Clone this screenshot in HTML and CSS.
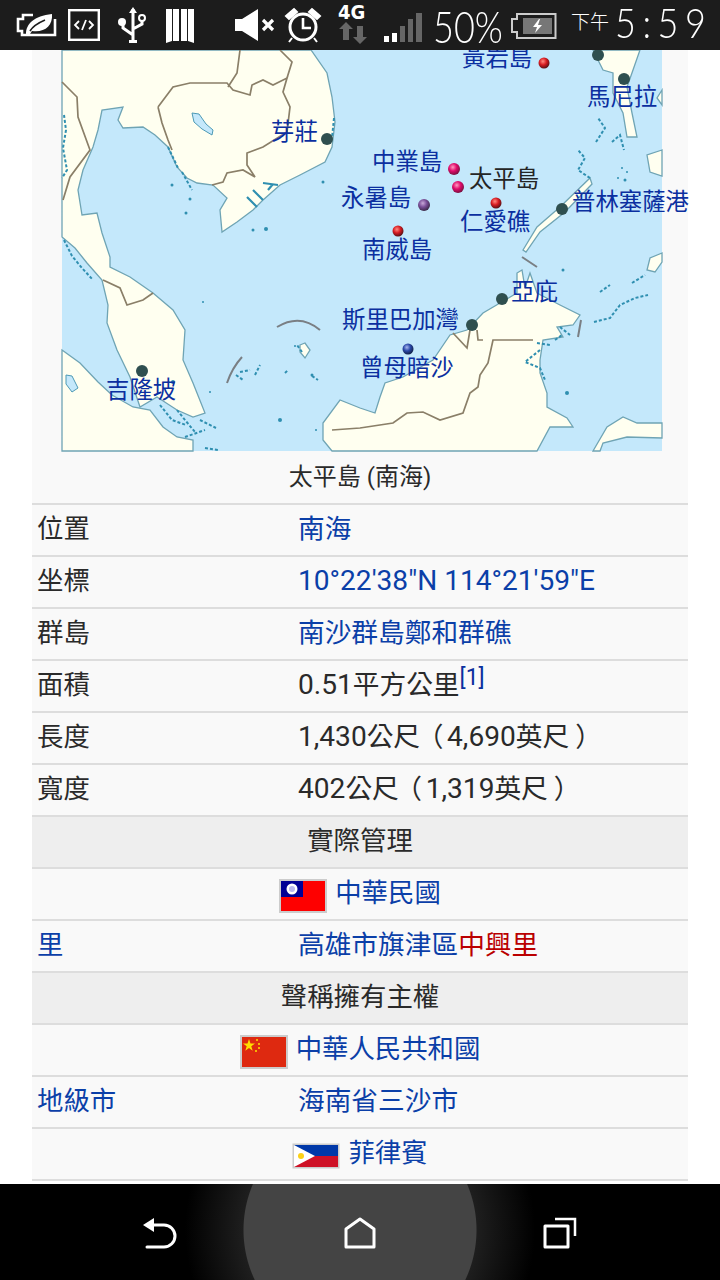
FILE: index.html
```html
<!DOCTYPE html>
<html lang="zh-Hant">
<head>
<meta charset="utf-8">
<title>太平島</title>
<link rel="stylesheet" href="styles.css">
</head>
<body>
<div class="phone">
  <header class="status">
    <svg class="si s1" width="40" height="24" viewBox="0 0 40 24"><path d="M16 2H6V6H1V18H5V22H38V6M32 22" fill="none" stroke="#fff" stroke-width="2.600"/><path d="M9 21c0-10 8-18 26-20 1 12-8 19-20 17l-2 3z" fill="#fff"/><path d="M13 18c3-5 8-8 15-11" stroke="#1c1c1c" stroke-width="1.600" fill="none"/></svg>
    <svg class="si s2" width="32" height="32" viewBox="0 0 32 32"><rect x="1.200" y="1.200" width="29.600" height="29.600" fill="none" stroke="#fff" stroke-width="2.400"/><path d="M11 12l-4 4 4 4M21 12l4 4-4 4M18 11l-4 10" fill="none" stroke="#fff" stroke-width="1.800"/></svg>
    <svg class="si s3" width="28" height="36" viewBox="0 0 28 36"><path d="M15 2v32M15 28l-10-7v-4M15 22l9-5v-4" fill="none" stroke="#fff" stroke-width="3"/><path d="M15 0l4 6h-8z" fill="#fff"/><circle cx="4" cy="15" r="4" fill="#fff"/><circle cx="24" cy="11" r="3" fill="none" stroke="#fff" stroke-width="2"/><rect x="11" y="33" width="8" height="3" fill="#fff"/></svg>
    <svg class="si s4" width="28" height="35" viewBox="0 0 28 35"><path d="M0 1h6v32l-6 2zM7 1h6v32H7zM15 1h6v32h-6zM22 1h6v34l-6-2z" fill="#fff"/></svg>
    <svg class="si s5" width="40" height="32" viewBox="0 0 40 32"><path d="M0 10h7L23 0v32L7 22H0z" fill="#fff"/><path d="M28 11l10 10M38 11l-10 10" stroke="#fff" stroke-width="3.200"/></svg>
    <svg class="si s6" width="36" height="36" viewBox="0 0 36 36"><circle cx="18" cy="20" r="13" fill="none" stroke="#fff" stroke-width="3"/><path d="M18 11v10h8" fill="none" stroke="#fff" stroke-width="2.600"/><path d="M1 9l8-7 3 3-8 7zM35 9l-8-7-3 3 8 7zM7 31l-3 4M29 31l3 4" stroke="#fff" fill="#fff" stroke-width="2"/></svg>
    <svg class="si s7" width="30" height="42" viewBox="0 0 30 42"><text x="0" y="17" class="net">4G</text><path d="M8 20l7 7h-4v11H5V27H1zM22 42l7-7h-4V24h-6v11h-4z" fill="#666"/></svg>
    <svg class="si s8" width="38" height="29" viewBox="0 0 38 29"><rect x="0" y="23" width="5" height="6" fill="#fff"/><rect x="8" y="20" width="5" height="9" fill="#fff"/><rect x="16" y="13" width="5" height="16" fill="#666"/><rect x="24" y="6" width="5" height="23" fill="#666"/><rect x="32" y="0" width="6" height="29" fill="#666"/></svg>
    <span class="pct">50%</span>
    <svg class="si s9" width="46" height="26" viewBox="0 0 46 26"><path d="M6 6V1h38.500v24H6v-6H1V6z" fill="none" stroke="#ccc" stroke-width="2"/><rect x="12" y="5" width="29" height="16" fill="#777"/><path d="M28 6l-6 8h4l-2 6 7-8h-4l2-6z" fill="#fff"/></svg>
    <span class="ampm">下午</span>
    <span class="clock">5:59</span>
  </header>

  <main class="page">
    <div class="infobox">
      <div class="mapcell">
        <svg class="map" width="600" height="401" viewBox="62 50 600 401">
          <rect x="62" y="50" width="600" height="401" class="sea"/>
          <g class="soft">
          <g class="land">
            <path d="M62 50H311L327 73 332 97 335 122 332 147 325 162 300 175 280 185 263 200 253 210 237 222 222 232 220 210 227 198 213 185 197 183 187 178 177 167 168 147 155 135 143 127 123 128 118 120 123 107 102 110 98 130 93 147 83 170 78 190 82 215 97 213 102 233 110 257 110 267 130 277 153 293 173 310 185 330 183 360 193 383 205 413 193 417 177 410 157 397 140 407 130 377 117 350 107 323 108 305 102 280 87 263 75 248 62 237Z"/>
            <path d="M62 350 80 363 98 382 112 395 133 407 150 410 163 427 177 437 193 440 193 451H62Z"/>
            <path d="M332 451 323 440 323 423 340 400 360 408 375 413 380 397 385 383 403 377 433 360 450 335 467 330 483 313 500 303 517 293 517 273 522 270 525 288 530 273 537 293 560 305 580 315 573 325 557 327 563 337 543 340 540 360 540 373 547 393 547 407 567 418 573 427 550 427 537 451Z"/>
            <path d="M593 451 607 427 623 417 637 423 662 423V438L627 437 603 443 600 451Z"/>
            <path d="M593 50 603 70 613 73 613 93 623 113 627 137 637 137 632 113 627 87 633 70 640 50Z"/>
            <path d="M523 250 537 227 560 207 590 178 592 184 565 212 540 232 526 252Z"/>
            <path d="M662 150 647 155 650 172 662 176ZM662 253 650 258 647 270 655 272 662 262ZM662 90 657 98 662 105Z"/>
            <path d="M300 345 305 343 310 350 305 358 300 352Z"/>
          </g>
          <g class="lake">
            <path d="M192 113 199 114 206 124 213 130 212 135 202 129 194 122Z"/>
            <path d="M66 375 72 376 78 388 72 392 66 384Z"/>
          </g>
          <g class="reef">
            <path d="M64 115 66 130 63 148 67 170 62 178M64 240 72 256 82 268 93 280M240 372 250 370M255 375 260 365M236 375 243 380"/>
            <path d="M177 410 185 420 195 432M160 405 172 420 186 425M200 420 216 428M185 437 205 430M205 448 218 450"/>
            <path d="M334 118 332 138M168 147 178 168M182 172 192 190"/>
            <path d="M590 178 578 170 585 158 578 150M596 142 605 128 598 118M612 142 620 135 624 150"/>
            <path d="M540 350 525 362 540 368 545 380M537 343 550 345M555 340 562 335M560 327 570 335"/>
            <path d="M594 322 610 318 620 305 635 298 648 295M600 292 610 285M632 283 645 275"/>
            <path d="M302 352 297 345M312 376 318 380M285 373 288 370"/>
          </g>
          <g class="delta">
            <path d="M247 197 257 207M253 190 263 200M263 183 278 185M268 190 273 184"/>
          </g>
          <g class="dots">
            <circle cx="295" cy="346" r="1"/><circle cx="312" cy="375" r="1.500"/><circle cx="280" cy="420" r="2"/><circle cx="316" cy="430" r="1"/><circle cx="203" cy="302" r="1"/><circle cx="173" cy="382" r="2"/><circle cx="210" cy="392" r="1"/>
            <circle cx="172" cy="185" r="1.500"/><circle cx="190" cy="199" r="1.500"/><circle cx="186" cy="213" r="1.500"/><circle cx="253" cy="230" r="1.500"/><circle cx="266" cy="229" r="2"/><circle cx="323" cy="182" r="1.500"/>
            <circle cx="622" cy="168" r="1"/><circle cx="627" cy="172" r="1"/><circle cx="618" cy="178" r="1"/><circle cx="625" cy="180" r="1.500"/><circle cx="563" cy="270" r="1.500"/><circle cx="567" cy="393" r="2"/>
          </g>
          <g class="borders">
            <path d="M158 107 173 87 190 83 227 83 233 90 250 95 252 85 263 80 273 85 287 78 283 92 290 107 287 132 263 147 247 153 247 165 255 177 243 170 227 173 223 182 212 185M158 107 162 123 168 140 172 150"/>
            <path d="M280 50 292 62 287 78M240 50 237 73 228 87M62 82 77 97 78 117 90 150 70 177 63 200"/>
            <path d="M103 280 120 288 127 305 143 300 153 293"/>
            <path d="M332 430 360 428 393 423 407 413 423 412 440 420 463 413 470 393 478 387 480 375 488 363 493 340 533 340"/>
            <path d="M453 333 467 348 470 330M477 330 478 340 483 340"/>
          </g>
          <g class="dash">
            <path d="M277 327Q300 313 320 330M242 357Q232 368 227 383M581 320 578 337M522 257 537 267"/>
          </g>
          </g>
          <g class="city">
            <circle cx="327" cy="139" r="6"/><circle cx="598" cy="55" r="6"/><circle cx="624" cy="79" r="6"/><circle cx="562" cy="209" r="6"/><circle cx="502" cy="299" r="6"/><circle cx="472" cy="325" r="6"/><circle cx="142" cy="371" r="6"/>
          </g>
          <defs>
            <radialGradient id="ballR" cx="0.400" cy="0.350" r="0.650"><stop offset="0" stop-color="#ff8a80"/><stop offset="0.500" stop-color="#d81c22"/><stop offset="1" stop-color="#5a1015"/></radialGradient>
            <radialGradient id="ballP" cx="0.400" cy="0.350" r="0.650"><stop offset="0" stop-color="#ff9ac0"/><stop offset="0.500" stop-color="#e00a6a"/><stop offset="1" stop-color="#7a1040"/></radialGradient>
            <radialGradient id="ballV" cx="0.400" cy="0.350" r="0.650"><stop offset="0" stop-color="#c8a8d8"/><stop offset="0.500" stop-color="#7a4f98"/><stop offset="1" stop-color="#3c2a4a"/></radialGradient>
            <radialGradient id="ballB" cx="0.400" cy="0.350" r="0.650"><stop offset="0" stop-color="#a8b8f0"/><stop offset="0.500" stop-color="#2a48a8"/><stop offset="1" stop-color="#10204a"/></radialGradient>
          </defs>
          <circle cx="544" cy="63" r="5.500" fill="url(#ballR)"/>
          <circle cx="496" cy="203" r="5.500" fill="url(#ballR)"/>
          <circle cx="398" cy="231" r="5.500" fill="url(#ballR)"/>
          <circle cx="454" cy="169" r="6" fill="url(#ballP)"/>
          <circle cx="458" cy="187" r="6" fill="url(#ballP)"/>
          <circle cx="424" cy="205" r="6" fill="url(#ballV)"/>
          <circle cx="408" cy="349" r="5.500" fill="url(#ballB)"/>
          <g class="lbl">
            <text x="462" y="66">黃岩島</text>
            <text x="587" y="105">馬尼拉</text>
            <text x="271" y="140">芽莊</text>
            <text x="372" y="170">中業島</text>
            <text x="341" y="206">永暑島</text>
            <text x="460" y="230">仁愛礁</text>
            <text x="362" y="258">南威島</text>
            <text x="572" y="210">普林塞薩港</text>
            <text x="511" y="300">亞庇</text>
            <text x="342" y="328">斯里巴加灣</text>
            <text x="360" y="376">曾母暗沙</text>
            <text x="106" y="398">吉隆坡</text>
            <text x="469" y="187" class="lbl-main">太平島</text>
          </g>
        </svg>
      </div>
      <div class="caption">太平島 (南海)</div>
      <div class="row"><div class="k">位置</div><div class="v"><a>南海</a></div></div>
      <div class="row"><div class="k">坐標</div><div class="v lat coord"><a>10°22′38″N 114°21′59″E</a></div></div>
      <div class="row"><div class="k">群島</div><div class="v"><a>南沙群島鄭和群礁</a></div></div>
      <div class="row"><div class="k">面積</div><div class="v"><span class="lat">0.51</span>平方公里<sup class="ref"><a>[1]</a></sup></div></div>
      <div class="row"><div class="k">長度</div><div class="v"><span class="lat">1,430</span>公尺<span class="po">（</span><span class="lat">4,690</span>英尺<span class="pc">）</span></div></div>
      <div class="row"><div class="k">寬度</div><div class="v"><span class="lat">402</span>公尺<span class="po">（</span><span class="lat">1,319</span>英尺<span class="pc">）</span></div></div>
      <div class="row head">實際管理</div>
      <div class="row center">
        <svg class="flag" width="48" height="34" viewBox="0 0 48 34"><rect x="1" y="1" width="46" height="32" fill="#fe0000" stroke="#ccc" stroke-width="2"/><rect x="2" y="2" width="22" height="16" fill="#000095"/><circle cx="13" cy="10" r="5.500" fill="#fff"/><circle cx="13" cy="10" r="3" fill="#b8b8ee"/></svg>
        <a>中華民國</a>
      </div>
      <div class="row"><div class="k"><a>里</a></div><div class="v"><a>高雄市旗津區</a><a class="red">中興里</a></div></div>
      <div class="row head">聲稱擁有主權</div>
      <div class="row center">
        <svg class="flag" width="48" height="34" viewBox="0 0 48 34"><rect x="1" y="1" width="46" height="32" fill="#de2910" stroke="#ccc" stroke-width="2"/><path d="M9 4l1.500 4.500h4.500l-3.700 2.700 1.400 4.500L9 13l-3.700 2.700 1.400-4.500L3 8.500h4.500z" fill="#ffde00"/><circle cx="17" cy="5" r="1" fill="#ffde00"/><circle cx="19" cy="9" r="1" fill="#ffde00"/><circle cx="19" cy="13" r="1" fill="#ffde00"/><circle cx="16" cy="16" r="1" fill="#ffde00"/></svg>
        <a>中華人民共和國</a>
      </div>
      <div class="row"><div class="k"><a>地級市</a></div><div class="v"><a>海南省三沙市</a></div></div>
      <div class="row center">
        <svg class="flag" width="48" height="26" viewBox="0 0 48 26"><rect x="0.500" y="0.500" width="47" height="25" fill="#ccc"/><rect x="2" y="2" width="44" height="11" fill="#0038a8"/><rect x="2" y="13" width="44" height="11" fill="#ce1126"/><path d="M2 2 23 13 2 24z" fill="#fff"/><circle cx="9" cy="13" r="3" fill="#fcd116"/></svg>
        <a>菲律賓</a>
      </div>
    </div>
  </main>

  <nav class="nav">
    <svg width="36" height="32" viewBox="0 0 36 32"><path d="M1 8 12 1v14z" fill="#fff"/><path d="M10 8H22a11 11 0 0 1 0 22H5" fill="none" stroke="#fff" stroke-width="3" stroke-linecap="round"/></svg>
    <svg width="32" height="32" viewBox="0 0 32 32"><path d="M2 12 16 2l14 10v18H2z" fill="none" stroke="#fff" stroke-width="3" stroke-linejoin="round"/></svg>
    <svg width="36" height="32" viewBox="0 0 36 32"><rect x="3" y="9" width="23" height="21" fill="none" stroke="#fff" stroke-width="3" stroke-linejoin="round"/><path d="M13 2H33V19" fill="none" stroke="#fff" stroke-width="2.500"/></svg>
  </nav>
</div>
</body>
</html>
```

FILE: styles.css
```css
* { box-sizing: border-box; }
html, body { margin: 0; padding: 0; background: #fff; }
body { font-family: Roboto, "Noto Sans CJK TC", sans-serif; }
.phone { width: 720px; height: 1280px; display: flex; flex-direction: column; overflow: hidden; }

.status { height: 50px; flex: none; background: #1c1c1c; color: #fff; display: flex; align-items: center; position: relative; z-index: 2; }
.si { flex: none; display: block; overflow: visible; }
.s1 { margin-left: 17px; }
.s2 { margin-left: 11px; }
.s3 { margin-left: 18px; }
.s4 { margin-left: 20px; }
.s5 { margin-left: 41px; }
.s6 { margin-left: 10px; }
.s7 { margin-left: 17px; margin-bottom: 4px; }
.s8 { margin-left: 16px; margin-top: 4px; }
.net { font: 700 20px "DejaVu Sans Condensed", "DejaVu Sans", sans-serif; fill: #fff; }
.pct { margin-left: 11px; width: 67px; font: 300 36px Lato, Roboto, sans-serif; line-height: 44px; padding-top: 1px; white-space: nowrap; transform: scaleY(1.180); }
.s9 { margin-left: 11px; margin-top: 2px; }
.ampm { margin-left: 14px; font-size: 19px; font-weight: 300; line-height: 40px; padding-bottom: 8px; font-family: "Noto Sans CJK TC", sans-serif; white-space: nowrap; }
.clock { margin-left: 6px; font: 300 36px Lato, Roboto, sans-serif; letter-spacing: 6.500px; line-height: 40px; padding-bottom: 6px; white-space: nowrap; transform: scaleY(1.150); }

.page { flex: 1; min-height: 0; background: #fff; padding: 0 32px; }
.infobox { background: #f9f9f9; font-size: 26.400px; color: #2a2a2a; }
.mapcell { display: flex; justify-content: center; padding-left: 4px; }
.map { display: block; overflow: visible; }
.sea { fill: #c4e8fb; }
.soft { filter: blur(0.400px); }
.land path { fill: #fffff0; stroke: #6fa4b4; stroke-width: 1.300; }
.lake path { fill: #c4e8fb; stroke: #4d9ab5; stroke-width: 1; }
.reef path { fill: none; stroke: #2f8fb0; stroke-width: 2; stroke-dasharray: 3 2; }
.delta path { fill: none; stroke: #2f8fb0; stroke-width: 2.200; }
.dots circle { fill: #2f8fb0; }
.borders path { fill: none; stroke: #8a7f68; stroke-width: 1.700; }
.dash path { fill: none; stroke: #7a7f84; stroke-width: 2; }
.city circle { fill: #2f4f4f; }
.lbl text { font: 23.400px "Noto Sans CJK TC", sans-serif; fill: #0b2fa0; }
.lbl .lbl-main { fill: #252525; }

.caption { height: 54px; padding-bottom: 6px; display: flex; align-items: center; justify-content: center; font-size: 24px; border-bottom: 2px solid #ddd; }
.row { height: 52px; padding-bottom: 7px; display: flex; align-items: center; border-bottom: 2px solid #ddd; white-space: nowrap; }
.k { width: 266px; padding-left: 5px; flex: none; }
.v { flex: 1; font-size: 26.700px; }
.lat { font-size: 28.100px; }
.coord { padding-top: 4px; }
.po { display: inline-block; width: 27px; padding-left: 9px; font-feature-settings: "palt"; }
.pc { display: inline-block; width: 24px; padding-left: 7px; font-feature-settings: "palt"; }
.head { justify-content: center; background: #eee; }
.center { justify-content: center; gap: 8px; }
a { color: #0b3fa8; }
a.red { color: #ba0000; }
.ref { font-size: 23px; line-height: 0; vertical-align: 9px; }
.ref a { color: #0b2f9e; }
.flag { display: block; flex: none; margin-top: 11px; }

.nav { height: 96px; flex: none; display: flex; align-items: flex-start; justify-content: space-between; padding: 33px 142px 0 142px; background: radial-gradient(circle 175px at 360px 46px, #444 0, #444 116px, #1e1e1e 117px, #000 100%); }
```
